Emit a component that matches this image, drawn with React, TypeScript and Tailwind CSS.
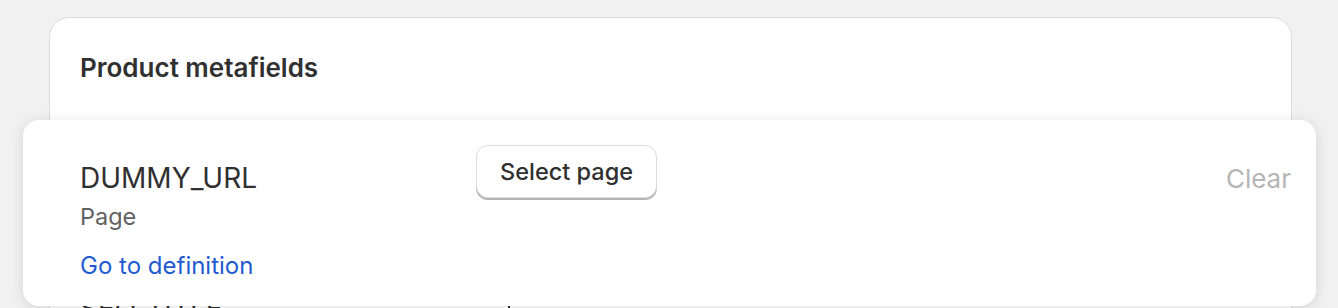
export default function App() {
  return (
    <div className="relative h-[308px] w-full overflow-hidden bg-[#f1f1f1] font-['Inter','Liberation_Sans',sans-serif] text-[#303030]">
      {/* card underneath */}
      <div className="ml-[49px] mt-[17px] h-[400px] w-[1243px] rounded-[20px] border border-[#dcdcdc] bg-white">
        <h2 className="pl-[30px] pt-[34px] text-[26px] font-semibold leading-[32px]">Product metafields</h2>
        <div className="flex items-start pl-[30px] pt-[208px]">
          <span className="w-[428px] text-[28px] leading-[34px]">SEO_TITLE</span>
          <span className="mt-[8px] h-[26px] w-[2px] bg-[#303030]" />
        </div>
      </div>

      {/* dragged row */}
      <div className="absolute left-[23px] top-[120px] flex h-[186px] w-[1293px] items-start rounded-[16px] bg-white pl-[57px] pr-[25px] pt-[25px] shadow-[0_2px_14px_rgba(0,0,0,0.12)]">
        <div className="flex w-[396px] flex-col pt-[16px]">
          <span className="text-[28px] leading-[34px]">DUMMY_URL</span>
          <span className="mt-[7px] text-[23.5px] leading-[30px] text-[#616161]">Page</span>
          <a href="#" className="mt-[19px] text-[24px] leading-[30px] text-[#1f5bd1]">
            Go to definition
          </a>
        </div>
        <button className="h-[53px] rounded-[12px] border border-[#dcdcdc] bg-white px-[23px] text-[23.5px] font-[550] shadow-[0_2px_0_#b5b5b5]">
          Select page
        </button>
        <div className="flex-1" />
        <span className="pt-[18px] text-[26px] leading-[32px] text-[#b5b5b5]">Clear</span>
      </div>
    </div>
  )
}
